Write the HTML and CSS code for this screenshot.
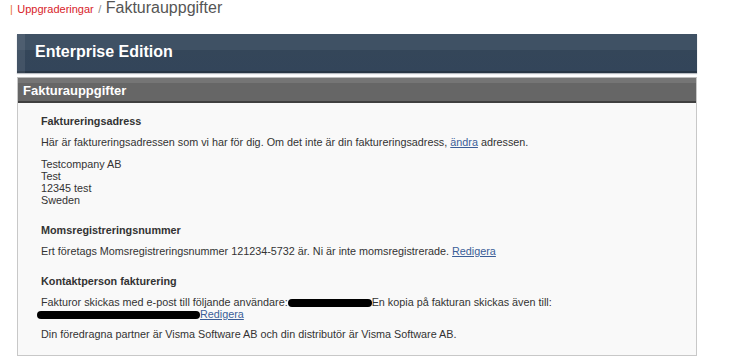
FILE: index.html
```html
<!DOCTYPE html>
<html lang="sv">
<head>
  <title>Fakturauppgifter</title>
  <link rel="stylesheet" href="styles.css">
</head>
<body>
  <div class="crumbs">
    <span class="crumb-sep">|</span>
    <a class="crumb-link" href="#">Uppgraderingar</a>
    <span class="crumb-slash">/</span>
    <span class="crumb-current">Fakturauppgifter</span>
  </div>

  <div class="page">
    <div class="edition">
      <h1 class="edition-title">Enterprise Edition</h1>
    </div>

    <div class="panel">
      <div class="panel-head">Fakturauppgifter</div>
      <div class="panel-body">
        <div class="section">
          <h3>Faktureringsadress</h3>
          <p>Här är faktureringsadressen som vi har för dig. Om det inte är din faktureringsadress, <a href="#">ändra</a> adressen.</p>
          <p class="address">Testcompany AB<br>Test<br>12345 test<br>Sweden</p>
        </div>

        <div class="section">
          <h3>Momsregistreringsnummer</h3>
          <p>Ert företags Momsregistreringsnummer 121234-5732 är. Ni är inte momsregistrerade. <a href="#">Redigera</a></p>
        </div>

        <div class="section">
          <h3>Kontaktperson fakturering</h3>
          <p class="contact">Fakturor skickas med e-post till följande användare:<span class="redact redact-1"></span>En kopia på fakturan skickas även till:<br><span class="redact redact-2"></span><a href="#">Redigera</a></p>
          <p>Din föredragna partner är Visma Software AB och din distributör är Visma Software AB.</p>
        </div>
      </div>
    </div>
  </div>
</body>
</html>
```

FILE: styles.css
```css
body {
  margin: 0;
  background: #fff;
  font-family: "Liberation Sans", Arial, sans-serif;
  color: #333;
}

.crumbs {
  padding-left: 10px;
  height: 34px;
  line-height: 16px;
  white-space: nowrap;
}

.crumb-sep,
.crumb-link {
  color: #d8232a;
  font-size: 11px;
  text-decoration: none;
}

.crumb-sep {
  color: #e8703a;
}

.crumb-slash {
  color: #888;
  font-size: 11px;
}

.crumb-current {
  color: #555;
  font-size: 16px;
}

.page {
  width: 680px;
  margin-left: 17px;
}

.edition {
  box-sizing: border-box;
  height: 39px;
  padding: 8px 0 0 18px;
  background: linear-gradient(#3f5164 0, #3f5164 16px, #344659 16px, #33455a 37px, #283645 37px);
  box-shadow: 0 1px 1px #b8bcc2;
  position: relative;
}

.edition::before {
  content: "";
  position: absolute;
  left: 0;
  top: 0;
  bottom: 0;
  width: 8px;
  background: rgba(255, 255, 255, 0.08);
}

.edition-title {
  margin: 0;
  color: #fff;
  font-size: 16px;
  line-height: 20px;
  font-weight: bold;
}

.panel {
  margin-top: 4px;
  border: 1px solid #c8c8c8;
  border-top-color: #bcbcbc;
}

.panel-head {
  height: 21px;
  padding: 2px 0 0 5px;
  line-height: 21px;
  background: linear-gradient(#757575 0, #757575 5px, #666 5px, #666 100%);
  border-bottom: 2px solid #404040;
  color: #fff;
  font-size: 13px;
  font-weight: bold;
}

.panel-body {
  background: #f9f9f9;
  padding: 12px 23px 15px;
}

.section {
  margin-bottom: 18px;
}

.section:last-child {
  margin-bottom: 0;
}

.section h3 {
  margin: 0 0 8px;
  font-size: 10.8px;
  line-height: 13px;
  font-weight: bold;
  color: #333;
}

.section p {
  margin: 0 0 10px;
  font-size: 10.8px;
  line-height: 12px;
  color: #333;
}

.section p:last-child {
  margin-bottom: 0;
}

.section p.contact {
  margin-bottom: 8px;
}

.section a {
  color: #3b5e98;
  text-decoration: underline;
}

.redact {
  display: inline-block;
  background: #000;
  height: 8px;
  border-radius: 4px;
  vertical-align: -1px;
}

.redact-1 {
  width: 84px;
}

.redact-2 {
  width: 163px;
  margin-left: -4px;
}
```
